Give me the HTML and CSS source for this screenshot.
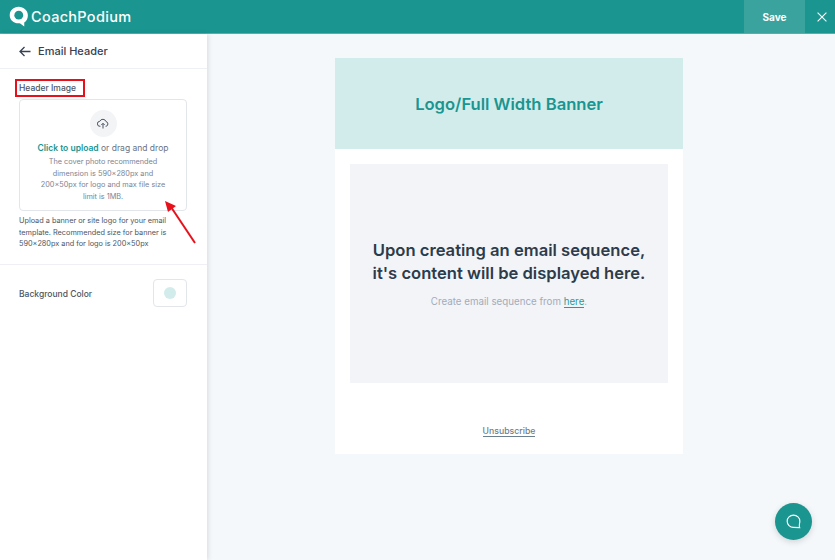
FILE: index.html
```html
<!DOCTYPE html>
<html lang="en">
<head>
    <meta charset="UTF-8">
    <title>Email Header</title>
    <link rel="stylesheet" href="styles.css">
</head>
<body>

<!-- Top bar -->
<header class="topbar">
    <div class="logo">
        <svg class="logo-mark" width="20" height="21" viewBox="0 0 24 26">
            <path d="M11.500 1C5.300 1 .5 5.600 .5 11.300S5.300 21.500 11.500 21.500c.9 0 1.300 0 2 .2L18.500 25.500V20.300C21.500 18.400 23 15 23 11.300 23 5.600 17.700 1 11.500 1Z" fill="#fff"/>
            <circle cx="11.700" cy="11.300" r="5.500" fill="#1a9590"/>
        </svg>
        <span class="logo-text">CoachPodium</span>
    </div>
    <div class="topbar-actions">
        <button class="save-btn">Save</button>
        <button class="close-btn">
            <svg width="10" height="10" viewBox="0 0 10 10"><path d="M.6.6l8.800 8.800M9.400.6L.6 9.400" stroke="#fff" stroke-width="1.100" fill="none"/></svg>
        </button>
    </div>
</header>

<div class="layout">
    <!-- Sidebar -->
    <aside class="sidebar">
        <div class="side-title">
            <svg width="12" height="11" viewBox="0 0 12 11"><path d="M11.500 5.500H1M5.500 1L1 5.500 5.500 10" stroke="#374151" stroke-width="1.300" fill="none"/></svg>
            <span>Email Header</span>
        </div>

        <div class="side-section">
            <div class="field-label">Header Image<span class="mark-box"></span></div>
            <div class="upload-box">
                <div class="upload-icon">
                    <svg width="12" height="11" viewBox="0 0 12 11"><path d="M3.400 8.300H3A2.500 2.500 0 0 1 2.800 3.300 3.300 3.300 0 0 1 9 3.600 2.400 2.400 0 0 1 9 8.300H8.600M6 10.500V5.500M4.300 7L6 5.300 7.700 7" stroke="#4b5563" stroke-width="1" fill="none"/></svg>
                </div>
                <p class="upload-main"><a>Click to upload</a> or drag and drop</p>
                <p class="upload-note">The cover photo recommended dimension is 590×280px and 200×50px for logo and max file size limit is 1MB.</p>
            </div>
            <p class="help-text">Upload a banner or site logo for your email template. Recommended size for banner is 590×280px and for logo is 200×50px</p>
        </div>

        <div class="color-row">
            <span class="field-label color-label">Background Color</span>
            <div class="swatch"><span class="swatch-dot"></span></div>
        </div>
    </aside>

    <!-- Email preview -->
    <main class="preview">
        <div class="email">
            <div class="banner">Logo/Full Width Banner</div>
            <div class="email-body">
                <div class="placeholder">
                    <h2>Upon creating an email sequence,<br>it's content will be displayed here.</h2>
                    <p>Create email sequence from <a>here</a>.</p>
                </div>
            </div>
            <div class="email-foot"><a>Unsubscribe</a></div>
        </div>
    </main>
</div>

<!-- Red annotation arrow -->
<svg class="arrow" width="40" height="50" viewBox="0 0 40 50">
    <path d="M34 46L10 10" stroke="#e8101a" stroke-width="2" fill="none"/>
    <path d="M4 4L15 9 7 15Z" fill="#e8101a"/>
</svg>

<button class="chat-btn">
    <svg width="15" height="15" viewBox="0 0 17 17"><path d="M8.500 1.200C4.500 1.200 1.300 4.300 1.300 8.200S4.500 15.200 8.500 15.200C10 15.200 12 15.300 15.500 15.500 14.900 14 15 12.500 15.300 10.800 15.600 10 15.700 9 15.700 8.200 15.700 4.300 12.500 1.200 8.500 1.200Z" stroke="#fff" stroke-width="1.300" fill="none"/></svg>
</button>

</body>
</html>
```

FILE: styles.css
```css
* {
    box-sizing: border-box;
}
html, body {
    height: 100%;
}
body {
    margin: 0;
    font-family: Inter, "Liberation Sans", sans-serif;
    background-color: #f4f8fb;
    color: #374151;
    overflow: hidden;
}
p, h2 {
    margin: 0;
}

/* Top bar */
.topbar {
    height: 34px;
    background-color: #1a9590;
    display: flex;
    justify-content: space-between;
    align-items: stretch;
    border-bottom: 1px solid #55b0ac;
}
.logo {
    display: flex;
    align-items: center;
    padding-left: 9px;
    gap: 2px;
}
.logo-text {
    font-family: Inter, sans-serif;
    color: white;
    font-size: 14.500px;
    font-weight: 500;
    letter-spacing: 0.3px;
}
.topbar-actions {
    display: flex;
}
.save-btn {
    width: 61px;
    border: none;
    background-color: #3aa39e;
    color: white;
    font-family: inherit;
    font-size: 10px;
    font-weight: 700;
}
.close-btn {
    width: 30px;
    border: none;
    background: none;
    display: flex;
    align-items: center;
    justify-content: center;
    padding: 0 0 0 3px;
}

/* Sidebar */
.layout {
    display: flex;
    height: 526px;
}
.sidebar {
    width: 207px;
    background-color: white;
    box-shadow: 1px 0 5px rgba(0, 0, 0, 0.12);
}
.side-title {
    height: 35px;
    display: flex;
    align-items: center;
    gap: 7px;
    padding-left: 19px;
    font-size: 11px;
    font-weight: 500;
    border-bottom: 1px solid #eef0f3;
}
.side-section {
    padding: 14px 20px 14px 19px;
    border-bottom: 1px solid #eef0f3;
}
.field-label {
    font-size: 8.500px;
    font-weight: 500;
    color: #4b5563;
    line-height: 10px;
}
.side-section .field-label {
    position: relative;
    margin-bottom: 6px;
}
.color-label {
    margin-top: 2px;
}
.mark-box {
    position: absolute;
    left: -4px;
    top: -4px;
    width: 70px;
    height: 18px;
    border: 2px solid #e8101a;
}
.upload-box {
    height: 112px;
    border: 1px solid #e2e5ea;
    border-radius: 4px;
    display: flex;
    flex-direction: column;
    align-items: center;
    padding: 10px 19px 0;
    text-align: center;
}
.upload-icon {
    width: 27px;
    height: 27px;
    border-radius: 50%;
    background-color: #f3f4f6;
    display: flex;
    align-items: center;
    justify-content: center;
    margin-bottom: 5px;
}
.upload-main {
    font-size: 8.500px;
    line-height: 12px;
    color: #6b7280;
    margin-bottom: 2px;
    white-space: nowrap;
}
.upload-main a {
    color: #1a9590;
    font-weight: 600;
}
.upload-note {
    font-size: 7.300px;
    line-height: 11.500px;
    color: #7b8494;
}
.help-text {
    font-size: 7.300px;
    line-height: 11.500px;
    color: #4b5563;
    margin-top: 4px;
}
.color-row {
    display: flex;
    justify-content: space-between;
    align-items: center;
    padding: 14px 20px 0 19px;
}
.swatch {
    width: 34px;
    height: 28px;
    border: 1px solid #e2e5ea;
    border-radius: 4px;
    display: flex;
    align-items: center;
    justify-content: center;
}
.swatch-dot {
    width: 12px;
    height: 12px;
    border-radius: 50%;
    background-color: #d2ecec;
}

/* Email preview */
.preview {
    flex: 1;
    display: flex;
    justify-content: center;
    padding: 24px 24px 0 0;
}
.email {
    width: 348px;
    height: 396px;
    background-color: white;
}
.banner {
    height: 91px;
    background-color: #d2ecec;
    color: #1a9590;
    font-size: 16.600px;
    font-weight: 600;
    display: flex;
    align-items: center;
    justify-content: center;
}
.email-body {
    padding: 15px 15px 0;
}
.placeholder {
    height: 219px;
    background-color: #f2f4f8;
    text-align: center;
    padding-top: 75px;
}
.placeholder h2 {
    font-size: 16.600px;
    line-height: 23px;
    font-weight: 600;
    color: #2d3b4a;
}
.placeholder p {
    font-size: 9.750px;
    color: #a3abb8;
    margin-top: 10px;
    line-height: 14px;
}
.placeholder a {
    color: #2a9a96;
    border-bottom: 1px solid #2a9a96;
}
.email-foot {
    text-align: center;
    padding-top: 43px;
    font-size: 8.700px;
    font-weight: 500;
    color: #6b7f8f;
}
.email-foot a {
    border-bottom: 1px solid #6b7f8f;
}

/* Things lying over the page */
.arrow {
    position: absolute;
    left: 161px;
    top: 197px;
}
.chat-btn {
    position: absolute;
    left: 775px;
    top: 503px;
    width: 37px;
    height: 37px;
    border: none;
    border-radius: 50%;
    background-color: #1a9590;
    box-shadow: 0 2px 6px rgba(0, 0, 0, 0.15);
    display: flex;
    align-items: center;
    justify-content: center;
    padding: 0;
}
```
